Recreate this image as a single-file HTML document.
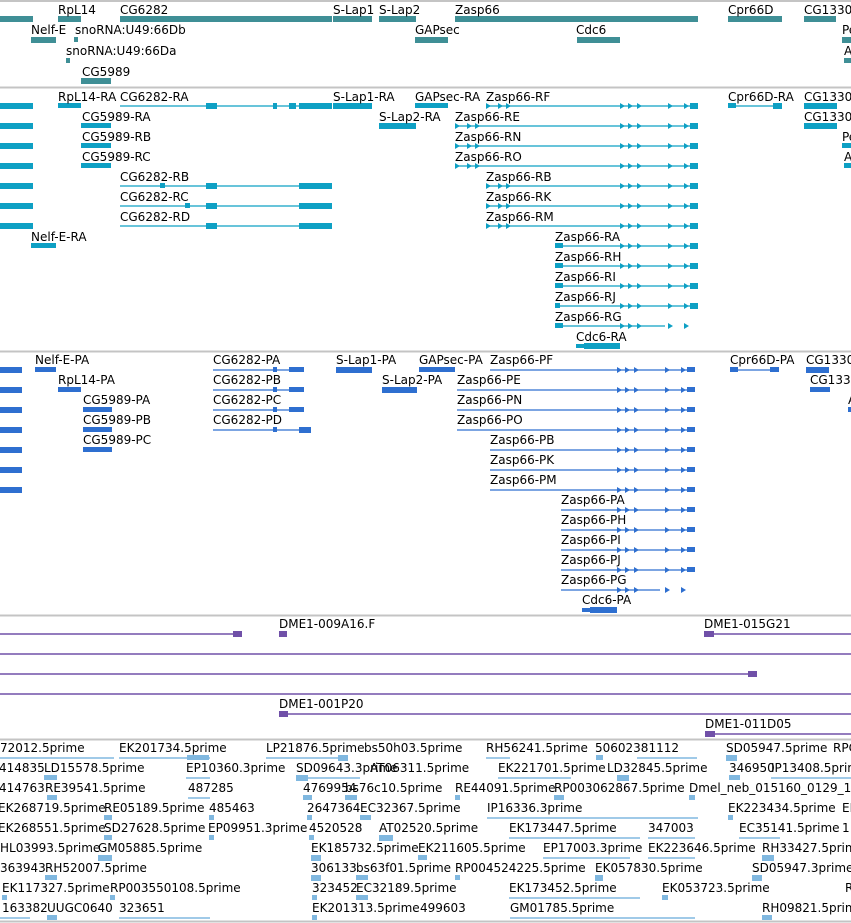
<!DOCTYPE html>
<html><head><meta charset="utf-8"><style>
html,body{margin:0;padding:0;background:#fff;width:851px;height:923px;overflow:hidden}
svg{display:block}
text{font-family:"DejaVu Sans","Liberation Sans",sans-serif;font-size:12px;fill:#000}
.g{fill:#3f8f96}.t{fill:#0ea0c4}.p{fill:#2e6fd0}.u{fill:#7050a8}.e{fill:#80b8e0}
.tl{stroke:#0ea0c4;stroke-width:1.2}.pl{stroke:#2e6fd0;stroke-width:1.2}.ul{stroke:#7050a8;stroke-width:1.5}.el{stroke:#80b8e0;stroke-width:1.5}
.s{stroke:#c4c4c4;stroke-width:2}
</style></head><body>
<svg width="851" height="923" viewBox="0 0 851 923">
<defs>
<g id="zt"><path d="M620 -3 l5 3 l-5 3z M628 -3 l5 3 l-5 3z M637 -3 l5 3 l-5 3z M668 -3 l5 3 l-5 3z M684 -3 l5 3 l-5 3z"/></g>
<g id="zs"><path d="M486 -3 l5 3 l-5 3z M498 -3 l5 3 l-5 3z M506 -3 l5 3 l-5 3z"/></g>
</defs>
<line class="s" x1="0" y1="1" x2="851" y2="1"/>
<line class="s" x1="0" y1="87.5" x2="851" y2="87.5"/>
<line class="s" x1="0" y1="351.5" x2="851" y2="351.5"/>
<line class="s" x1="0" y1="615.5" x2="851" y2="615.5"/>
<line class="s" x1="0" y1="739.5" x2="851" y2="739.5"/>
<line class="s" x1="0" y1="921.5" x2="851" y2="921.5"/>

<!-- gene track -->
<g class="g">
<rect x="0" y="16" width="33" height="6"/><rect x="58" y="16" width="23" height="6"/>
<rect x="120" y="16" width="212" height="6"/><rect x="333" y="16" width="39" height="6"/>
<rect x="379" y="16" width="37" height="6"/><rect x="455" y="16" width="243" height="6"/>
<rect x="728" y="16" width="54" height="6"/><rect x="804" y="16" width="32" height="6"/>
<rect x="31" y="37" width="25" height="6"/><rect x="74" y="37" width="4" height="5"/>
<rect x="415" y="37" width="33" height="6"/><rect x="577" y="37" width="43" height="6"/>
<rect x="842" y="37" width="9" height="6"/>
<rect x="66" y="58" width="4" height="5"/><rect x="844" y="58" width="7" height="5"/>
<rect x="81" y="78" width="30" height="6"/>
</g>
<text x="58" y="14">RpL14</text><text x="120" y="14">CG6282</text><text x="333" y="14">S-Lap1</text><text x="379" y="14">S-Lap2</text><text x="455" y="14">Zasp66</text><text x="728" y="14">Cpr66D</text><text x="804" y="14">CG1330</text>
<text x="31" y="34">Nelf-E</text><text x="75" y="34">snoRNA:U49:66Db</text><text x="415" y="34">GAPsec</text><text x="576" y="34">Cdc6</text><text x="842" y="34">Pe</text>
<text x="66" y="55">snoRNA:U49:66Da</text><text x="844" y="55">A</text>
<text x="82" y="76">CG5989</text>

<!-- transcript track -->
<g class="t">
<rect x="0" y="103" width="33" height="6"/><rect x="0" y="123" width="33" height="6"/><rect x="0" y="143" width="33" height="6"/><rect x="0" y="163" width="33" height="6"/><rect x="0" y="183" width="33" height="6"/><rect x="0" y="203" width="33" height="6"/><rect x="0" y="223" width="33" height="6"/>
<rect x="58" y="103" width="23" height="5"/>
<rect x="206" y="103" width="11" height="6"/><rect x="299" y="103" width="33" height="6"/><rect x="273" y="103" width="4" height="6"/><rect x="289" y="103" width="7" height="6"/>
<rect x="333" y="103" width="39" height="6"/><rect x="415" y="103" width="33" height="5"/>
<rect x="773" y="103" width="9" height="6"/><rect x="728" y="103" width="8" height="5"/>
<rect x="804" y="103" width="33" height="6"/><rect x="804" y="123" width="33" height="6"/>
<rect x="81" y="123" width="30" height="5"/><rect x="81" y="143" width="30" height="5"/><rect x="81" y="163" width="30" height="5"/>
<rect x="379" y="123" width="37" height="6"/>
<rect x="842" y="143" width="9" height="5"/><rect x="844" y="163" width="7" height="5"/>
<rect x="206" y="183" width="11" height="6"/><rect x="299" y="183" width="33" height="6"/><rect x="160" y="183" width="5" height="5"/>
<rect x="206" y="203" width="11" height="6"/><rect x="299" y="203" width="33" height="6"/><rect x="185" y="203" width="5" height="5"/>
<rect x="206" y="223" width="11" height="6"/><rect x="299" y="223" width="33" height="6"/>
<rect x="31" y="243" width="25" height="5"/>
<rect x="584" y="343" width="36" height="6"/><rect x="576" y="344" width="8" height="4"/>
</g>
<g class="tl">
<line x1="120" y1="106" x2="332" y2="106"/><line x1="486" y1="106" x2="698" y2="106"/><line x1="728" y1="106" x2="782" y2="106"/>
<line x1="455" y1="126" x2="698" y2="126"/><line x1="455" y1="146" x2="698" y2="146"/><line x1="455" y1="166" x2="698" y2="166"/>
<line x1="120" y1="186" x2="332" y2="186"/><line x1="120" y1="206" x2="332" y2="206"/><line x1="120" y1="226" x2="332" y2="226"/>
<line x1="486" y1="186" x2="698" y2="186"/><line x1="486" y1="206" x2="698" y2="206"/><line x1="486" y1="226" x2="698" y2="226"/>
<line x1="555" y1="246" x2="698" y2="246"/><line x1="555" y1="266" x2="698" y2="266"/><line x1="555" y1="286" x2="698" y2="286"/><line x1="555" y1="306" x2="698" y2="306"/><line x1="555" y1="326" x2="665" y2="326"/>
</g>
<g class="t">
<rect x="690" y="103" width="8" height="6"/><rect x="690" y="123" width="8" height="6"/><rect x="690" y="143" width="8" height="6"/><rect x="690" y="163" width="8" height="6"/><rect x="690" y="183" width="8" height="6"/><rect x="690" y="203" width="8" height="6"/><rect x="690" y="223" width="8" height="6"/><rect x="690" y="243" width="8" height="6"/><rect x="690" y="263" width="8" height="6"/><rect x="690" y="283" width="8" height="6"/><rect x="690" y="303" width="8" height="6"/>
<use href="#zt" y="106"/><use href="#zt" y="126"/><use href="#zt" y="146"/><use href="#zt" y="166"/><use href="#zt" y="186"/><use href="#zt" y="206"/><use href="#zt" y="226"/><use href="#zt" y="246"/><use href="#zt" y="266"/><use href="#zt" y="286"/><use href="#zt" y="306"/><use href="#zt" y="326"/>
<use href="#zs" y="106"/><use href="#zs" y="186"/><use href="#zs" y="206"/><use href="#zs" y="226"/>
<use href="#zs" x="-31" y="126"/><use href="#zs" x="-31" y="146"/><use href="#zs" x="-31" y="166"/>
<rect x="555" y="243" width="8" height="5"/><rect x="555" y="263" width="8" height="5"/><rect x="555" y="283" width="8" height="5"/><rect x="555" y="303" width="5" height="5"/><rect x="555" y="323" width="8" height="5"/>
</g>
<text x="58" y="101">RpL14-RA</text><text x="120" y="101">CG6282-RA</text><text x="333" y="101">S-Lap1-RA</text><text x="415" y="101">GAPsec-RA</text><text x="486" y="101">Zasp66-RF</text><text x="728" y="101">Cpr66D-RA</text><text x="804" y="101">CG1330</text>
<text x="82" y="121">CG5989-RA</text><text x="379" y="121">S-Lap2-RA</text><text x="455" y="121">Zasp66-RE</text><text x="804" y="121">CG1330</text>
<text x="82" y="141">CG5989-RB</text><text x="455" y="141">Zasp66-RN</text><text x="842" y="141">Pe</text>
<text x="82" y="161">CG5989-RC</text><text x="455" y="161">Zasp66-RO</text><text x="844" y="161">A</text>
<text x="120" y="181">CG6282-RB</text><text x="486" y="181">Zasp66-RB</text>
<text x="120" y="201">CG6282-RC</text><text x="486" y="201">Zasp66-RK</text>
<text x="120" y="221">CG6282-RD</text><text x="486" y="221">Zasp66-RM</text>
<text x="31" y="241">Nelf-E-RA</text><text x="555" y="241">Zasp66-RA</text>
<text x="555" y="261">Zasp66-RH</text><text x="555" y="281">Zasp66-RI</text><text x="555" y="301">Zasp66-RJ</text><text x="555" y="321">Zasp66-RG</text>
<text x="576" y="341">Cdc6-RA</text>

<!-- protein track -->
<g class="p">
<rect x="0" y="367" width="22" height="6"/><rect x="0" y="387" width="22" height="6"/><rect x="0" y="407" width="22" height="6"/><rect x="0" y="427" width="22" height="6"/><rect x="0" y="447" width="22" height="6"/><rect x="0" y="467" width="22" height="6"/><rect x="0" y="487" width="22" height="6"/>
<rect x="35" y="367" width="21" height="5"/><rect x="58" y="387" width="23" height="5"/>
<rect x="83" y="407" width="29" height="5"/><rect x="83" y="427" width="29" height="5"/><rect x="83" y="447" width="29" height="5"/>
<rect x="289" y="367" width="15" height="5"/><rect x="289" y="387" width="15" height="5"/><rect x="289" y="407" width="15" height="5"/><rect x="299" y="427" width="12" height="6"/>
<rect x="273" y="367" width="4" height="5"/><rect x="273" y="387" width="4" height="5"/><rect x="273" y="407" width="4" height="5"/><rect x="273" y="427" width="4" height="5"/>
<rect x="336" y="367" width="36" height="6"/><rect x="382" y="387" width="35" height="6"/><rect x="419" y="367" width="36" height="5"/>
<rect x="770" y="367" width="9" height="5"/><rect x="730" y="367" width="8" height="5"/><rect x="806" y="367" width="23" height="6"/><rect x="810" y="387" width="20" height="5"/><rect x="848" y="407" width="3" height="5"/>
<rect x="590" y="607" width="27" height="6"/><rect x="582" y="608" width="8" height="4"/>
<rect x="687" y="367" width="8" height="5"/><rect x="687" y="387" width="8" height="5"/><rect x="687" y="407" width="8" height="5"/><rect x="687" y="427" width="8" height="5"/><rect x="687" y="447" width="8" height="5"/><rect x="687" y="467" width="8" height="5"/><rect x="687" y="487" width="8" height="5"/><rect x="687" y="507" width="8" height="5"/><rect x="687" y="527" width="8" height="5"/><rect x="687" y="547" width="8" height="5"/><rect x="687" y="567" width="8" height="5"/>
<use href="#zt" x="-3" y="370"/><use href="#zt" x="-3" y="390"/><use href="#zt" x="-3" y="410"/><use href="#zt" x="-3" y="430"/><use href="#zt" x="-3" y="450"/><use href="#zt" x="-3" y="470"/><use href="#zt" x="-3" y="490"/><use href="#zt" x="-3" y="510"/><use href="#zt" x="-3" y="530"/><use href="#zt" x="-3" y="550"/><use href="#zt" x="-3" y="570"/><use href="#zt" x="-3" y="590"/>
</g>
<g class="pl">
<line x1="213" y1="370" x2="304" y2="370"/><line x1="213" y1="390" x2="304" y2="390"/><line x1="213" y1="410" x2="304" y2="410"/><line x1="213" y1="430" x2="304" y2="430"/>
<line x1="490" y1="370" x2="695" y2="370"/><line x1="730" y1="370" x2="779" y2="370"/>
<line x1="457" y1="390" x2="695" y2="390"/><line x1="457" y1="410" x2="695" y2="410"/><line x1="457" y1="430" x2="695" y2="430"/>
<line x1="490" y1="450" x2="695" y2="450"/><line x1="490" y1="470" x2="695" y2="470"/><line x1="490" y1="490" x2="695" y2="490"/>
<line x1="561" y1="510" x2="695" y2="510"/><line x1="561" y1="530" x2="695" y2="530"/><line x1="561" y1="550" x2="695" y2="550"/><line x1="561" y1="570" x2="695" y2="570"/><line x1="561" y1="590" x2="660" y2="590"/>
</g>
<text x="35" y="364">Nelf-E-PA</text><text x="213" y="364">CG6282-PA</text><text x="336" y="364">S-Lap1-PA</text><text x="419" y="364">GAPsec-PA</text><text x="490" y="364">Zasp66-PF</text><text x="730" y="364">Cpr66D-PA</text><text x="806" y="364">CG1330</text>
<text x="58" y="384">RpL14-PA</text><text x="213" y="384">CG6282-PB</text><text x="382" y="384">S-Lap2-PA</text><text x="457" y="384">Zasp66-PE</text><text x="810" y="384">CG133</text>
<text x="83" y="404">CG5989-PA</text><text x="213" y="404">CG6282-PC</text><text x="457" y="404">Zasp66-PN</text><text x="848" y="404">A</text>
<text x="83" y="424">CG5989-PB</text><text x="213" y="424">CG6282-PD</text><text x="457" y="424">Zasp66-PO</text>
<text x="83" y="444">CG5989-PC</text><text x="490" y="444">Zasp66-PB</text>
<text x="490" y="464">Zasp66-PK</text><text x="490" y="484">Zasp66-PM</text>
<text x="561" y="504">Zasp66-PA</text><text x="561" y="524">Zasp66-PH</text><text x="561" y="544">Zasp66-PI</text><text x="561" y="564">Zasp66-PJ</text><text x="561" y="584">Zasp66-PG</text>
<text x="582" y="604">Cdc6-PA</text>

<!-- purple track -->
<g class="ul">
<line x1="0" y1="634" x2="240" y2="634"/><line x1="704" y1="634" x2="851" y2="634"/>
<line x1="0" y1="654" x2="851" y2="654"/><line x1="0" y1="674" x2="755" y2="674"/><line x1="0" y1="694" x2="851" y2="694"/>
<line x1="279" y1="714" x2="851" y2="714"/><line x1="705" y1="734" x2="851" y2="734"/>
</g>
<g class="u">
<rect x="233" y="631" width="9" height="6"/><rect x="279" y="631" width="8" height="6"/><rect x="704" y="631" width="10" height="6"/>
<rect x="748" y="671" width="9" height="6"/><rect x="279" y="711" width="9" height="6"/><rect x="705" y="731" width="10" height="6"/>
</g>
<text x="279" y="628">DME1-009A16.F</text><text x="704" y="628">DME1-015G21</text>
<text x="279" y="708">DME1-001P20</text><text x="705" y="728">DME1-011D05</text>

<!-- EST track -->
<g class="el">
<line x1="0" y1="758" x2="114" y2="758"/><line x1="119" y1="758" x2="210" y2="758"/><line x1="266" y1="758" x2="345" y2="758"/><line x1="486" y1="758" x2="510" y2="758"/><line x1="637" y1="758" x2="697" y2="758"/>
<line x1="186" y1="778" x2="210" y2="778"/><line x1="296" y1="778" x2="360" y2="778"/><line x1="498" y1="778" x2="571" y2="778"/><line x1="771" y1="778" x2="851" y2="778"/>
<line x1="188" y1="798" x2="210" y2="798"/>
<line x1="487" y1="818" x2="698" y2="818"/><line x1="509" y1="838" x2="640" y2="838"/><line x1="648" y1="838" x2="695" y2="838"/><line x1="739" y1="838" x2="780" y2="838"/>
<line x1="543" y1="858" x2="630" y2="858"/><line x1="648" y1="858" x2="695" y2="858"/>
<line x1="509" y1="898" x2="640" y2="898"/><line x1="119" y1="918" x2="210" y2="918"/><line x1="510" y1="918" x2="695" y2="918"/><line x1="0" y1="918" x2="30" y2="918"/>
</g>
<g class="e">
<rect x="338" y="755" width="10" height="6"/><rect x="187" y="755" width="22" height="5"/><rect x="340" y="755" width="8" height="6"/><rect x="596" y="755" width="7" height="5"/><rect x="726" y="755" width="11" height="6"/>
<rect x="44" y="775" width="13" height="5"/><rect x="296" y="775" width="12" height="6"/><rect x="617" y="775" width="12" height="6"/><rect x="729" y="775" width="11" height="5"/>
<rect x="47" y="795" width="10" height="5"/><rect x="303" y="795" width="9" height="5"/><rect x="345" y="795" width="12" height="5"/><rect x="455" y="795" width="5" height="5"/><rect x="554" y="795" width="10" height="5"/><rect x="689" y="795" width="6" height="5"/>
<rect x="104" y="815" width="8" height="5"/><rect x="209" y="815" width="5" height="5"/><rect x="307" y="815" width="5" height="5"/><rect x="360" y="815" width="11" height="5"/><rect x="728" y="815" width="5" height="5"/>
<rect x="104" y="835" width="8" height="5"/><rect x="209" y="835" width="5" height="5"/><rect x="309" y="835" width="5" height="5"/><rect x="379" y="835" width="14" height="6"/>
<rect x="98" y="855" width="14" height="6"/><rect x="311" y="855" width="10" height="6"/><rect x="418" y="855" width="9" height="5"/><rect x="762" y="855" width="12" height="6"/>
<rect x="45" y="875" width="12" height="5"/><rect x="311" y="875" width="10" height="6"/><rect x="356" y="875" width="12" height="5"/><rect x="455" y="875" width="5" height="5"/><rect x="595" y="875" width="8" height="6"/><rect x="752" y="875" width="10" height="6"/>
<rect x="2" y="895" width="5" height="5"/><rect x="110" y="895" width="5" height="5"/><rect x="312" y="895" width="5" height="5"/><rect x="356" y="895" width="12" height="5"/><rect x="662" y="895" width="6" height="5"/>
<rect x="47" y="915" width="10" height="5"/><rect x="312" y="915" width="5" height="5"/><rect x="762" y="915" width="10" height="5"/>
</g>
<text x="0" y="752">72012.5prime</text><text x="119" y="752">EK201734.5prime</text><text x="266" y="752">LP21876.5prime</text><text x="364" y="752">bs50h03.5prime</text><text x="486" y="752">RH56241.5prime</text><text x="595" y="752">50602381112</text><text x="726" y="752">SD05947.5prime</text><text x="833" y="752">RPC</text>
<text x="-1" y="772">414835</text><text x="44" y="772">LD15578.5prime</text><text x="186" y="772">EP10360.3prime</text><text x="296" y="772">SD09643.3prime</text><text x="370" y="772">AT06311.5prime</text><text x="498" y="772">EK221701.5prime</text><text x="607" y="772">LD32845.5prime</text><text x="729" y="772">346950</text><text x="771" y="772">IP13408.5prime</text>
<text x="-1" y="792">414763</text><text x="45" y="792">RE39541.5prime</text><text x="188" y="792">487285</text><text x="303" y="792">4769954</text><text x="345" y="792">bs76c10.5prime</text><text x="455" y="792">RE44091.5prime</text><text x="554" y="792">RP003062867.5prime</text><text x="689" y="792">Dmel_neb_015160_0129_1</text>
<text x="-2" y="812">EK268719.5prime</text><text x="104" y="812">RE05189.5prime</text><text x="209" y="812">485463</text><text x="307" y="812">2647364</text><text x="360" y="812">EC32367.5prime</text><text x="487" y="812">IP16336.3prime</text><text x="728" y="812">EK223434.5prime</text><text x="842" y="812">EI</text>
<text x="-2" y="832">EK268551.5prime</text><text x="104" y="832">SD27628.5prime</text><text x="208" y="832">EP09951.3prime</text><text x="309" y="832">4520528</text><text x="379" y="832">AT02520.5prime</text><text x="509" y="832">EK173447.5prime</text><text x="648" y="832">347003</text><text x="739" y="832">EC35141.5prime</text><text x="842" y="832">1</text>
<text x="0" y="852">HL03993.5prime</text><text x="98" y="852">GM05885.5prime</text><text x="311" y="852">EK185732.5prime</text><text x="418" y="852">EK211605.5prime</text><text x="543" y="852">EP17003.3prime</text><text x="648" y="852">EK223646.5prime</text><text x="762" y="852">RH33427.5prime</text>
<text x="0" y="872">363943</text><text x="45" y="872">RH52007.5prime</text><text x="311" y="872">306133</text><text x="356" y="872">bs63f01.5prime</text><text x="455" y="872">RP004524225.5prime</text><text x="595" y="872">EK057830.5prime</text><text x="752" y="872">SD05947.3prime</text>
<text x="2" y="892">EK117327.5prime</text><text x="110" y="892">RP003550108.5prime</text><text x="312" y="892">323452</text><text x="356" y="892">EC32189.5prime</text><text x="509" y="892">EK173452.5prime</text><text x="662" y="892">EK053723.5prime</text><text x="845" y="892">R</text>
<text x="2" y="912">163382</text><text x="47" y="912">UUGC0640</text><text x="119" y="912">323651</text><text x="312" y="912">EK201313.5prime</text><text x="420" y="912">499603</text><text x="510" y="912">GM01785.5prime</text><text x="762" y="912">RH09821.5prime</text>
</svg>
</body></html>
